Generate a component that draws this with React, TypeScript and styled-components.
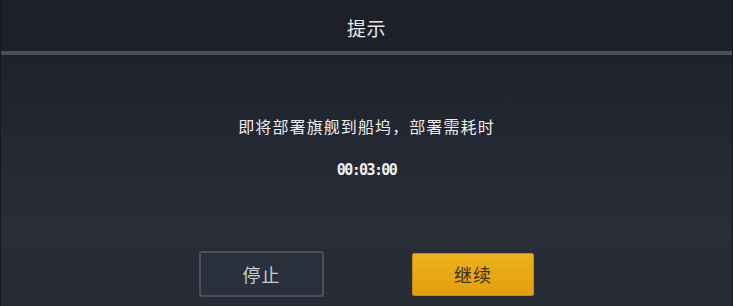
import { createGlobalStyle, styled } from "styled-components";

const GlobalStyle = createGlobalStyle`
  html, body {
    margin: 0;
    padding: 0;
    background: #1e212b;
  }
  * {
    box-sizing: border-box;
  }
`;

const Dialog = styled.div(() => ({
  width: "733px",
  height: "306px",
  display: "flex",
  flexDirection: "column",
  borderLeft: "1px solid #15181e",
  borderRight: "1px solid #15181e",
  fontFamily: '"Noto Sans CJK SC", "Noto Sans", sans-serif',
  overflow: "hidden",
}));

const Header = styled.header(() => ({
  height: "51px",
  display: "flex",
  alignItems: "center",
  justifyContent: "center",
  background: "#1d2029",
  borderBottom: "4px solid #4a4e58",
  flexShrink: 0,
  boxSizing: "content-box",
}));

const Title = styled.h1(() => ({
  margin: 0,
  paddingTop: "4px",
  fontSize: "19px",
  fontWeight: 400,
  color: "#e8e8ea",
  letterSpacing: "0.5px",
}));

const Body = styled.section(() => ({
  flex: 1,
  display: "flex",
  flexDirection: "column",
  alignItems: "center",
  justifyContent: "center",
  gap: "22px",
  background: "linear-gradient(to bottom, #1e222b, #292e39)",
}));

const Message = styled.p(() => ({
  margin: 0,
  marginTop: "-2px",
  fontSize: "16px",
  lineHeight: "22px",
  color: "#ebebed",
  letterSpacing: "1.1px",
}));

const Timer = styled.div(() => ({
  fontFamily: '"DejaVu Sans Mono", monospace',
  fontWeight: 700,
  fontSize: "15px",
  lineHeight: "22px",
  letterSpacing: "-1.6px",
  color: "#f0f0f2",
}));

const Footer = styled.footer(() => ({
  height: "64px",
  flexShrink: 0,
  display: "flex",
  alignItems: "center",
  justifyContent: "center",
  gap: "88px",
  background: "#272c36",
}));

const Button = styled.button<{ $primary?: boolean }>(({ $primary }) => ({
  fontFamily: '"Noto Sans CJK SC", "Noto Sans", sans-serif',
  fontSize: "18px",
  width: $primary ? "122px" : "125px",
  height: $primary ? "43px" : "46px",
  display: "flex",
  alignItems: "center",
  justifyContent: "center",
  padding: 0,
  cursor: "pointer",
  letterSpacing: "1px",
  borderRadius: $primary ? "2px" : "3px",
  border: $primary ? "1px solid #c98a0c" : "2px solid #4a505d",
  background: $primary
    ? "linear-gradient(to bottom, #ecb21c, #e49d0b)"
    : "#2a303b",
  color: $primary ? "#3b2f17" : "#c9cacd",
}));

export default function App() {
  return (
    <>
      <GlobalStyle />
      <Dialog>
        <Header>
          <Title>提示</Title>
        </Header>
        <Body>
          <Message>即将部署旗舰到船坞，部署需耗时</Message>
          <Timer>00:03:00</Timer>
        </Body>
        <Footer>
          <Button>停止</Button>
          <Button $primary>继续</Button>
        </Footer>
      </Dialog>
    </>
  );
}
